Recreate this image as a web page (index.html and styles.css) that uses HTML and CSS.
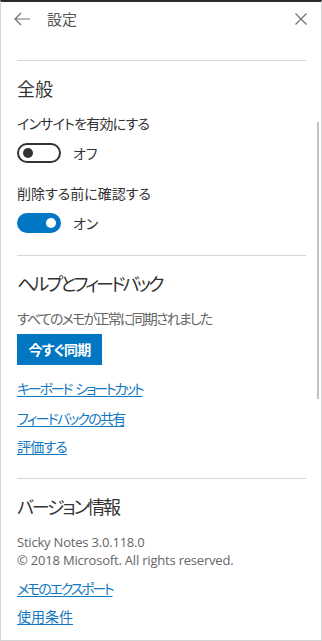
FILE: index.html
```html
<!DOCTYPE html>
<html lang="ja">
<head>
<meta charset="utf-8">
<title>設定</title>
<link rel="stylesheet" href="styles.css">
</head>
<body>
<div class="window">
  <div class="header">
    <span class="back" aria-label="戻る">
      <svg width="18" height="14" viewBox="0 0 18 14"><path d="M8 1 L2 7 L8 13 M2 7 H17" fill="none" stroke="#707070" stroke-width="1.2"/></svg>
    </span>
    <span class="title">設定</span>
    <span class="close" aria-label="閉じる">
      <svg width="12" height="12" viewBox="0 0 12 12"><path d="M0.5 0.5 L11.5 11.5 M11.5 0.5 L0.5 11.5" fill="none" stroke="#707070" stroke-width="1.2"/></svg>
    </span>
  </div>
  <div class="content">
    <div class="divider first"></div>
    <h2 class="heading">全般</h2>
    <div class="label tight-s">インサイトを有効にする</div>
    <div class="toggle-row">
      <span class="toggle off"><span class="knob"></span></span>
      <span class="state">オフ</span>
    </div>
    <div class="label second">削除する前に確認する</div>
    <div class="toggle-row">
      <span class="toggle on"><span class="knob"></span></span>
      <span class="state">オン</span>
    </div>
    <div class="divider"></div>
    <h2 class="heading tight-xl">ヘルプとフィードバック</h2>
    <div class="muted tight-m">すべてのメモが正常に同期されました</div>
    <div class="btn-row"><span class="btn">今すぐ同期</span></div>
    <a class="link l1 tight-l" href="#">キーボード ショートカット</a>
    <a class="link l2 tight-m" href="#">フィードバックの共有</a>
    <a class="link l3 tight-s" href="#">評価する</a>
    <div class="divider d3"></div>
    <h2 class="heading tight-l">バージョン情報</h2>
    <div class="version">
      <div>Sticky Notes 3.0.118.0</div>
      <div>© 2018 Microsoft. All rights reserved.</div>
    </div>
    <a class="link l4 tight-l" href="#">メモのエクスポート</a>
    <a class="link l5" href="#">使用条件</a>
  </div>
  <div class="scrollbar"></div>
</div>
</body>
</html>
```
FILE: styles.css
```css
html, body {
  margin: 0;
  padding: 0;
  background: #ffffff;
}
body {
  font-family: "Noto Sans CJK JP", "Noto Sans", sans-serif;
  font-feature-settings: "palt";
  color: #333333;
}
.window {
  position: relative;
  width: 322px;
  height: 641px;
  box-sizing: border-box;
  border-top: 2px solid #2b2b2b;
  border-left: 1px solid #d4d4d4;
  border-right: 1px solid #d4d4d4;
  border-bottom: 1px solid #d4d4d4;
  overflow: hidden;
  background: #ffffff;
}
.header {
  height: 34px;
  display: flex;
  align-items: center;
  padding: 0 14px 0 12px;
}
.back {
  display: flex;
  width: 18px;
  height: 14px;
}
.title {
  margin-left: 16px;
  font-size: 15px;
  line-height: 20px;
  color: #555555;
  flex: 1;
}
.close {
  display: flex;
  width: 12px;
  height: 12px;
}
.content {
  display: flex;
  flex-direction: column;
  align-items: flex-start;
  padding: 0 15px 0 16px;
}
.divider {
  align-self: stretch;
  height: 1px;
  background: #d6d6d6;
  margin-top: 22px;
}
.divider.first {
  margin-top: 24px;
}
.divider.d3 {
  margin-top: 22px;
}
.heading {
  margin: 15px 0 0 0;
  font-size: 18px;
  line-height: 24px;
  font-weight: normal;
  color: #333333;
}
.label {
  margin-top: 13px;
  font-size: 14px;
  line-height: 20px;
  color: #333333;
}
.label.second {
  margin-top: 20px;
}
.tight-s { letter-spacing: -0.8px; }
.tight-m { letter-spacing: -1.8px; }
.tight-l { letter-spacing: -2.2px; }
.tight-xl { letter-spacing: -2.8px; }
.toggle-row {
  margin-top: 10px;
  display: flex;
  align-items: center;
  height: 20px;
}
.toggle {
  width: 44px;
  height: 20px;
  box-sizing: border-box;
  border-radius: 10px;
  display: flex;
  align-items: center;
}
.toggle.off {
  border: 2px solid #333333;
  padding-left: 4px;
}
.toggle.off .knob {
  width: 10px;
  height: 10px;
  border-radius: 50%;
  background: #333333;
}
.toggle.on {
  background: #0177c6;
  justify-content: flex-end;
  padding-right: 5px;
}
.toggle.on .knob {
  width: 10px;
  height: 10px;
  border-radius: 50%;
  background: #ffffff;
}
.state {
  margin-left: 12px;
  font-size: 14px;
  line-height: 20px;
  color: #333333;
}
.muted {
  margin-top: 13px;
  font-size: 14px;
  line-height: 20px;
  color: #666666;
}
.btn-row {
  margin-top: 6px;
  display: flex;
}
.btn {
  height: 31px;
  width: 85px;
  box-sizing: border-box;
  background: #0177c1;
  color: #ffffff;
  font-size: 14px;
  font-weight: bold;
  line-height: 31px;
  text-align: center;
  letter-spacing: -0.8px;
}
.link {
  font-size: 14px;
  line-height: 20px;
  color: #1479c1;
  text-decoration: underline;
  text-underline-offset: 2px;
}
.l1 { margin-top: 13px; word-spacing: 3px; }
.l2 { margin-top: 10px; }
.l3 { margin-top: 8px; }
.version {
  margin-top: 15px;
  font-family: "Open Sans", "Noto Sans", sans-serif;
  font-size: 13px;
  line-height: 18px;
  color: #666666;
  letter-spacing: -0.2px;
}
.l4 { margin-top: 9px; }
.l5 { margin-top: 8px; }
.scrollbar {
  position: absolute;
  right: 2px;
  top: 120px;
  width: 2px;
  height: 277px;
  background: #c2c2c2;
}
```
